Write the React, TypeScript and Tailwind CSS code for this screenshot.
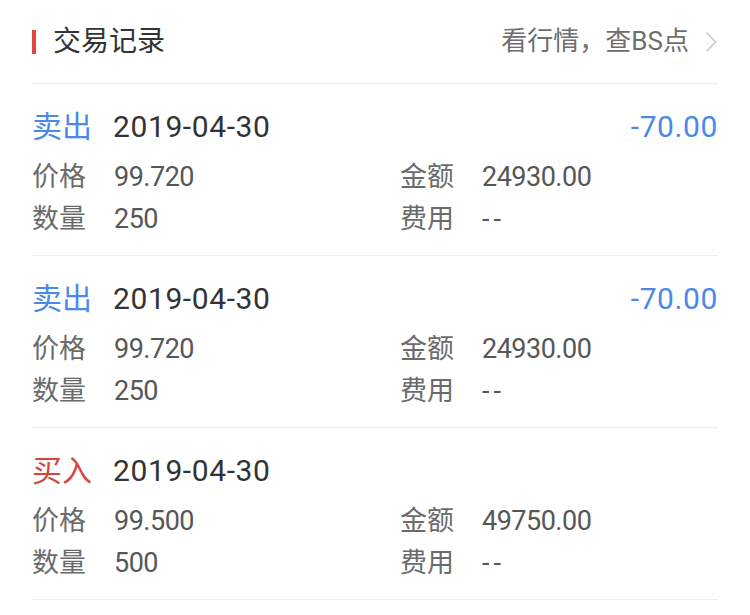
import React from 'react';

type Trade = {
  side: 'sell' | 'buy';
  date: string;
  price: string;
  amount: string;
  qty: string;
  fee: string;
  pnl?: string;
};

const trades: Trade[] = [
  { side: 'sell', date: '2019-04-30', price: '99.720', amount: '24930.00', qty: '250', fee: '--', pnl: '-70.00' },
  { side: 'sell', date: '2019-04-30', price: '99.720', amount: '24930.00', qty: '250', fee: '--', pnl: '-70.00' },
  { side: 'buy', date: '2019-04-30', price: '99.500', amount: '49750.00', qty: '500', fee: '--' },
];

const font = { fontFamily: 'Roboto, "Noto Sans CJK SC", sans-serif' };

function Field({ label, value, dashed }: { label: string; value: string; dashed?: boolean }) {
  return (
    <div className="flex h-[42px] items-center">
      <span className="w-[82px] shrink-0 text-[27px] text-[#6b6b6b]">{label}</span>
      <span className={`text-[27px] text-[#575757] ${dashed ? 'tracking-[4px]' : 'tracking-[-0.5px]'}`}>
        {value}
      </span>
    </div>
  );
}

function TradeRow({ trade }: { trade: Trade }) {
  const isSell = trade.side === 'sell';
  return (
    <div className="border-b border-[#ececec] pt-[22px] pb-[15px]">
      <div className="flex h-[40px] items-center">
        <span className={`mr-[21px] text-[30px] ${isSell ? 'text-[#4a89e8]' : 'text-[#d8443c]'}`}>
          {isSell ? '卖出' : '买入'}
        </span>
        <span className="text-[30px] tracking-[0.6px] text-[#333]">{trade.date}</span>
        {trade.pnl && (
          <span className="ml-auto text-[30px] tracking-[0.6px] text-[#4a89e8]">{trade.pnl}</span>
        )}
      </div>
      <div className="mt-[10px] grid grid-cols-[368px_1fr]">
        <Field label="价格" value={trade.price} />
        <Field label="金额" value={trade.amount} />
        <Field label="数量" value={trade.qty} />
        <Field label="费用" value={trade.fee} dashed />
      </div>
    </div>
  );
}

export default function App() {
  return (
    <div className="min-h-screen bg-white px-[32px]" style={font}>
      <div className="flex h-[84px] items-center border-b border-[#ececec]">
        <span className="mr-[17px] h-[24px] w-[4px] bg-[#e0483c]" />
        <span className="text-[28px] text-[#333]">交易记录</span>
        <span className="ml-auto text-[26px] text-[#6e6e6e]">看行情，查BS点</span>
        <svg className="ml-[16px] mr-[1px]" width="12" height="22" viewBox="0 0 12 22" fill="none">
          <path d="M1.5 1.5L10.5 11L1.5 20.5" stroke="#c8c8c8" strokeWidth="1.6" />
        </svg>
      </div>
      {trades.map((t, i) => (
        <TradeRow key={i} trade={t} />
      ))}
    </div>
  );
}
